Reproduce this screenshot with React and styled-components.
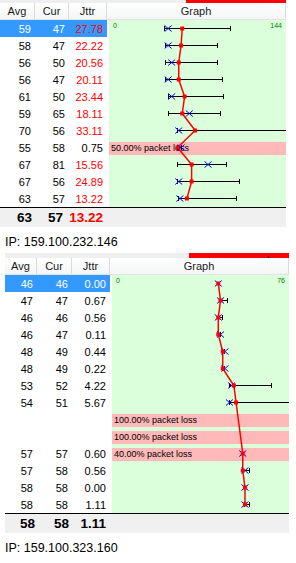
import React from 'react';
import styled, { createGlobalStyle } from 'styled-components';

const GlobalStyle = createGlobalStyle`
  html, body {
    margin: 0;
    padding: 0;
    background: #ffffff;
  }
  body {
    font-family: 'Liberation Sans', Arial, sans-serif;
    color: #000;
  }
  * {
    box-sizing: border-box;
  }
`;

const ROW_H = 17;
const GRAPH_W = 177;

// one block per traced host
const hosts = [
  {
    ip: '159.100.232.146',
    scale: 144,
    indent: 0,
    strip: 3,
    tick: false,
    cols: [35, 34, 38],
    sumPad: [3, 6, 4],
    rows: [
      { avg: 59, cur: 47, jttr: '27.78', lo: 44, hi: 100, selected: true },
      { avg: 58, cur: 47, jttr: '22.22', lo: 45, hi: 89 },
      { avg: 56, cur: 50, jttr: '20.56', lo: 45, hi: 89 },
      { avg: 56, cur: 47, jttr: '20.11', lo: 45, hi: 93 },
      { avg: 61, cur: 50, jttr: '23.44', lo: 47, hi: 94 },
      { avg: 59, cur: 65, jttr: '18.11', lo: 47, hi: 92 },
      { avg: 70, cur: 56, jttr: '33.11', lo: 55, hi: 150 },
      { avg: 55, cur: 58, jttr: '0.75', lo: 55, hi: 58, loss: '50.00' },
      { avg: 67, cur: 81, jttr: '15.56', lo: 55, hi: 97 },
      { avg: 67, cur: 56, jttr: '24.89', lo: 55, hi: 108 },
      { avg: 63, cur: 57, jttr: '13.22', lo: 56, hi: 105 },
    ],
    total: { avg: 63, cur: 57, jttr: '13.22' },
  },
  {
    ip: '159.100.323.160',
    scale: 76,
    indent: 5,
    strip: 5,
    tick: true,
    cols: [32, 35, 38],
    sumPad: [2, 3, 4],
    rows: [
      { avg: 46, cur: 46, jttr: '0.00', lo: 46, hi: 46, selected: true },
      { avg: 47, cur: 47, jttr: '0.67', lo: 47, hi: 50 },
      { avg: 46, cur: 46, jttr: '0.56', lo: 46, hi: 48 },
      { avg: 46, cur: 47, jttr: '0.11', lo: 46, hi: 47 },
      { avg: 48, cur: 49, jttr: '0.44', lo: 48, hi: 49 },
      { avg: 48, cur: 49, jttr: '0.22', lo: 48, hi: 49 },
      { avg: 53, cur: 52, jttr: '4.22', lo: 51, hi: 70 },
      { avg: 54, cur: 51, jttr: '5.67', lo: 51, hi: 90 },
      { loss: '100.00' },
      { loss: '100.00' },
      { avg: 57, cur: 57, jttr: '0.60', lo: 57, hi: 57, loss: '40.00' },
      { avg: 57, cur: 58, jttr: '0.56', lo: 57, hi: 60 },
      { avg: 58, cur: 58, jttr: '0.00', lo: 58, hi: 58 },
      { avg: 58, cur: 58, jttr: '1.11', lo: 58, hi: 60 },
    ],
    total: { avg: 58, cur: 58, jttr: '1.11' },
  },
];

const isHigh = j => parseFloat(j) > 10;

const Page = styled.div`
  display: flex;
  flex-direction: column;
  width: 296px;
`;

const Table = styled.div`
  width: ${p => p.$width}px;
  margin-left: ${p => p.$indent}px;
  font-size: 11px;
`;

const Strip = styled.div`
  height: ${p => p.$height}px;
  background: #efefef;
  display: flex;
  justify-content: flex-end;
`;

const LossMeter = styled.div`
  position: relative;
  width: 100px;
  background: #ff0000;
`;

const MeterTick = styled.span`
  position: absolute;
  right: 20px;
  bottom: 0;
  width: 1px;
  height: 2px;
  background: #000;
`;

const Header = styled.div`
  display: flex;
  height: 17px;
  background: linear-gradient(#ffffff, #f4f5f6);
  border-bottom: 1px solid #e3e3e3;
`;

const HeadCell = styled.div`
  flex: none;
  width: ${p => p.$w}px;
  border-right: 1px solid #dadada;
  text-align: center;
  line-height: 16px;
  font-size: 11px;
  color: #1a1a1a;
`;

const Body = styled.div`
  position: relative;
`;

const Row = styled.div`
  display: flex;
  height: ${ROW_H}px;
`;

const NumCell = styled.div`
  flex: none;
  width: ${p => p.$w}px;
  padding: 1px 4px 0 0;
  line-height: 16px;
  text-align: right;
  background: ${p => (p.$selected ? '#3399ff' : '#ffffff')};
  color: ${p => (p.$red ? '#ff0000' : p.$selected ? '#ffffff' : '#000000')};
`;

const Gap = styled.div`
  flex: none;
  width: 2px;
`;

const GraphCell = styled.div`
  flex: none;
  width: ${GRAPH_W}px;
  background: #daffda;
  padding-top: 3px;
`;

const LossBand = styled.div`
  height: 13px;
  background: #ffb9b9;
  font-size: 9px;
  line-height: 13px;
  padding-left: 2px;
  white-space: nowrap;
  overflow: hidden;
`;

const PlotSvg = styled.svg`
  position: absolute;
  top: 0;
  left: ${p => p.$left}px;
  overflow: hidden;
  pointer-events: none;
`;

const Summary = styled.div`
  display: flex;
  height: 20px;
  border-top: 1px solid #000;
  background: #f0f0f0;
  font-size: 13.5px;
  font-weight: bold;
  line-height: 19px;
`;

const SumCell = styled.div`
  flex: none;
  width: ${p => p.$w}px;
  padding-right: ${p => p.$pad}px;
  text-align: right;
  white-space: nowrap;
  color: ${p => (p.$red ? '#ff0000' : '#000000')};
`;

const IpLabel = styled.div`
  height: 26px;
  padding: 7px 0 0 5px;
  font-size: 12.5px;
  line-height: 16px;
`;

const Plot = ({ rows, scale, left }) => {
  const x = v => 4 + (Math.min(v, scale * 1.1) / scale) * (GRAPH_W - 8);
  const y = i => i * ROW_H + 8.5;
  const pts = rows
    .map((r, i) => (r.avg != null ? `${x(r.avg)},${y(i)}` : null))
    .filter(Boolean)
    .join(' ');

  return (
    <PlotSvg width={GRAPH_W} height={rows.length * ROW_H} $left={left}>
      <text x="4" y="8" fontSize="7" fill="#008000" fontFamily="Liberation Sans, sans-serif">0</text>
      <text x={GRAPH_W - 4} y="8" fontSize="7" fill="#008000" textAnchor="end" fontFamily="Liberation Sans, sans-serif">
        {scale}
      </text>
      {rows.map((r, i) =>
        r.avg != null && r.hi > r.lo ? (
          <g key={'b' + i} stroke="#000" strokeWidth="1" shapeRendering="crispEdges">
            <line x1={x(r.lo)} y1={y(i)} x2={x(r.hi)} y2={y(i)} />
            <line x1={x(r.lo)} y1={y(i) - 2.5} x2={x(r.lo)} y2={y(i) + 2.5} />
            <line x1={x(r.hi)} y1={y(i) - 2.5} x2={x(r.hi)} y2={y(i) + 2.5} />
          </g>
        ) : null
      )}
      <polyline points={pts} fill="none" stroke="#ff0000" strokeWidth="1.5" />
      {rows.map((r, i) =>
        r.avg != null ? (
          <g key={'p' + i}>
            <path
              d={`M${x(r.cur) - 3.5} ${y(i) - 3}L${x(r.cur) + 3.5} ${y(i) + 3}M${x(r.cur) - 3.5} ${y(i) + 3}L${x(r.cur) + 3.5} ${y(i) - 3}`}
              stroke="#0000ff"
              strokeWidth="1"
              fill="none"
            />
            <rect x={x(r.avg) - 2} y={y(i) - 2} width="4" height="4" fill="#ff0000" />
          </g>
        ) : null
      )}
    </PlotSvg>
  );
};

const HostTable = ({ host }) => {
  const [wAvg, wCur, wJttr] = host.cols;
  const [pAvg, pCur, pJttr] = host.sumPad;
  const width = wAvg + wCur + wJttr + 2 + GRAPH_W;
  const graphLeft = wAvg + wCur + wJttr + 2;

  return (
    <>
      <Table $width={width} $indent={host.indent}>
        <Strip $height={host.strip}>
          <LossMeter>{host.tick && <MeterTick />}</LossMeter>
        </Strip>
        <Header>
          <HeadCell $w={wAvg}>Avg</HeadCell>
          <HeadCell $w={wCur}>Cur</HeadCell>
          <HeadCell $w={wJttr}>Jttr</HeadCell>
          <HeadCell $w={GRAPH_W + 2}>Graph</HeadCell>
        </Header>
        <Body>
          {host.rows.map((r, i) => (
            <Row key={i}>
              <NumCell $w={wAvg} $selected={r.selected}>{r.avg}</NumCell>
              <NumCell $w={wCur} $selected={r.selected}>{r.cur}</NumCell>
              <NumCell $w={wJttr} $selected={r.selected} $red={r.jttr && isHigh(r.jttr)}>
                {r.jttr}
              </NumCell>
              <Gap />
              <GraphCell>{r.loss && <LossBand>{r.loss}% packet loss</LossBand>}</GraphCell>
            </Row>
          ))}
          <Plot rows={host.rows} scale={host.scale} left={graphLeft} />
        </Body>
        <Summary>
          <SumCell $w={wAvg} $pad={pAvg}>{host.total.avg}</SumCell>
          <SumCell $w={wCur} $pad={pCur}>{host.total.cur}</SumCell>
          <SumCell $w={wJttr} $pad={pJttr} $red={isHigh(host.total.jttr)}>
            {host.total.jttr}
          </SumCell>
        </Summary>
      </Table>
      <IpLabel>IP: {host.ip}</IpLabel>
    </>
  );
};

export default function App() {
  return (
    <>
      <GlobalStyle />
      <Page>
        {hosts.map(h => (
          <HostTable key={h.ip} host={h} />
        ))}
      </Page>
    </>
  );
}
